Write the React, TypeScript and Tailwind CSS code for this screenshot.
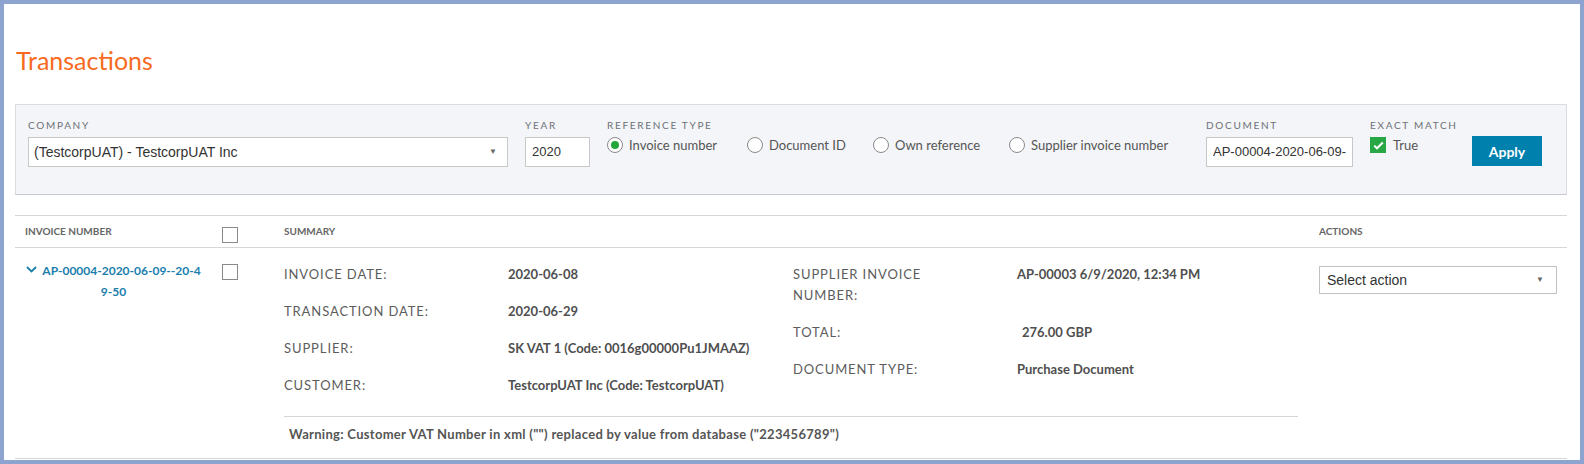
import React from "react";

function Chevron() {
  return (
    <svg width="11" height="7" viewBox="0 0 11 7" className="inline-block align-[2px] mr-[5px]">
      <path d="M1 1 L5.5 5.5 L10 1" fill="none" stroke="#1b7ead" strokeWidth="1.8" />
    </svg>
  );
}

function Radio({ checked, label, w }: { checked?: boolean; label: string; w: string }) {
  return (
    <div className={`flex items-center h-[16px] ${w}`}>
      <span className="w-[16px] h-[16px] rounded-full border border-[#8a8a8a] bg-white flex items-center justify-center shrink-0">
        {checked && <span className="w-[8px] h-[8px] rounded-full bg-[#22a83a]" />}
      </span>
      <span className="ml-[6px] text-[13px] leading-[16px] text-[#555]">{label}</span>
    </div>
  );
}

function Label({ children }: { children: React.ReactNode }) {
  return (
    <div className="text-[10px] leading-[12px] tracking-[1.7px] uppercase text-[#6c7177] mb-[6px] whitespace-nowrap">
      {children}
    </div>
  );
}

function Item({ label, value, extra }: { label: string; value: string; extra?: string }) {
  return (
    <div className="flex">
      <div className="w-[224px] pr-[56px] shrink-0 text-[13px] leading-[21px] tracking-[0.9px] uppercase text-[#5c5c5c]">
        {label}
      </div>
      <div className={`text-[13px] leading-[21px] font-bold text-[#4f4f4f] ${extra ?? ""}`}>{value}</div>
    </div>
  );
}

export default function App() {
  return (
    <div className="w-[1584px] h-[464px] overflow-hidden border-4 border-[#8da4d0] bg-white font-['Lato',sans-serif]">
      <div className="pl-[11px] pr-[13px]">
        <h1 className="pt-[40px] pl-px text-[25px] leading-[32px] font-normal text-[#f76a1f]">Transactions</h1>

        <div className="mt-[28px] bg-[#f4f5f8] border border-[#d9dce1] border-b-[#c6c9ce] pt-[14px] pb-[27px] pl-[12px] flex items-start gap-[17px]">
          <div className="w-[480px]">
            <Label>Company</Label>
            <div className="h-[30px] bg-white border border-[#c8c8c8] flex items-center justify-between pl-[5px] pr-[10px] font-['Liberation_Sans',Arial,sans-serif] text-[14px] text-[#333]">
              <span>(TestcorpUAT) - TestcorpUAT Inc</span>
              <span className="text-[8px] text-[#666]">▼</span>
            </div>
          </div>
          <div className="w-[65px]">
            <Label>Year</Label>
            <div className="h-[30px] bg-white border border-[#c8c8c8] flex items-center pl-[6px] font-['Liberation_Sans',Arial,sans-serif] text-[13px] text-[#333]">
              2020
            </div>
          </div>
          <div className="w-[582px]">
            <Label>Reference type</Label>
            <div className="flex">
              <Radio checked label="Invoice number" w="w-[140px]" />
              <Radio label="Document ID" w="w-[126px]" />
              <Radio label="Own reference" w="w-[136px]" />
              <Radio label="Supplier invoice number" w="w-auto" />
            </div>
          </div>
          <div className="w-[147px]">
            <Label>Document</Label>
            <div className="h-[30px] bg-white border border-[#c8c8c8] flex items-center px-[6px] overflow-hidden whitespace-nowrap font-['Liberation_Sans',Arial,sans-serif] text-[13px] text-[#333]">
              <span className="block w-full overflow-hidden">AP-00004-2020-06-09--20-49-50</span>
            </div>
          </div>
          <div className="w-[85px]">
            <Label>Exact match</Label>
            <div className="flex items-center h-[16px] mt-px">
              <span className="w-[16px] h-[16px] shrink-0 bg-[#27a844] flex items-center justify-center">
                <svg width="11" height="9" viewBox="0 0 11 9">
                  <path d="M1.2 4.6 L4 7.3 L9.8 1.5" fill="none" stroke="#fff" strokeWidth="2" />
                </svg>
              </span>
              <span className="ml-[7px] text-[13px] leading-[16px] text-[#555]">True</span>
            </div>
          </div>
          <button className="mt-[17px] w-[70px] h-[30px] bg-[#0080ad] text-white font-bold text-[14px]">Apply</button>
        </div>

        <div className="mt-[20px] border-t border-[#d6d6d6]">
          <div className="flex h-[32px] border-b border-[#d6d6d6] text-[10px] leading-[12px] font-bold text-[#666] uppercase">
            <div className="w-[197px] px-[10px] pt-[9px]">Invoice number</div>
            <div className="w-[62px] px-[10px] pt-[11px]">
              <span className="block w-[16px] h-[16px] border border-[#8a8a8a] bg-white" />
            </div>
            <div className="w-[1035px] px-[10px] pt-[9px]">Summary</div>
            <div className="flex-1 px-[10px] pt-[9px]">Actions</div>
          </div>

          <div className="flex border-b border-[#d6d6d6]">
            <div className="w-[197px] px-[10px] pt-[12px] text-center text-[12px] leading-[21px] font-bold text-[#1b7ead]">
              <div className="whitespace-nowrap">
                <Chevron />
                AP-00004-2020-06-09--20-4
              </div>
              <div>9-50</div>
            </div>
            <div className="w-[62px] px-[10px] pt-[16px]">
              <span className="block w-[16px] h-[16px] border border-[#8a8a8a] bg-white" />
            </div>
            <div className="w-[1035px] pl-[10px] pr-[11px] pt-[16px]">
              <div className="grid grid-cols-2">
                <div className="flex flex-col gap-[16px]">
                  <Item label="Invoice date:" value="2020-06-08" />
                  <Item label="Transaction date:" value="2020-06-29" />
                  <Item label="Supplier:" value="SK VAT 1 (Code: 0016g00000Pu1JMAAZ)" />
                  <Item label="Customer:" value="TestcorpUAT Inc (Code: TestcorpUAT)" />
                </div>
                <div className="flex flex-col gap-[16px] pl-[2px]">
                  <Item label="Supplier invoice number:" value="AP-00003 6/9/2020, 12:34 PM" />
                  <Item label="Total:" value="276.00 GBP" extra="pl-[5px]" />
                  <Item label="Document type:" value="Purchase Document" />
                </div>
              </div>
              <div className="mt-[20px] border-t border-[#d6d6d6] pt-[7px] pb-[14px] pl-[5px] text-[13px] tracking-[0.3px] leading-[20px] font-bold text-[#555]">
                Warning: Customer VAT Number in xml ("") replaced by value from database ("223456789")
              </div>
            </div>
            <div className="flex-1 px-[10px] pt-[18px]">
              <div className="h-[28px] bg-white border border-[#c2c2c2] flex items-center justify-between pl-[7px] pr-[12px] font-['Liberation_Sans',Arial,sans-serif] text-[14px] text-[#333]">
                <span>Select action</span>
                <span className="text-[8px] text-[#666]">▼</span>
              </div>
            </div>
          </div>
        </div>
      </div>
    </div>
  );
}
